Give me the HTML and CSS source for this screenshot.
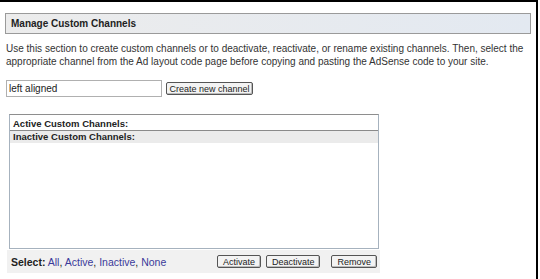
FILE: index.html
```html
<!DOCTYPE html>
<html>
<head>
<meta charset="utf-8">
<link rel="stylesheet" href="styles.css">
</head>
<body>
<div class="frame">
  <div class="header">Manage Custom Channels</div>
  <p class="intro">Use this section to create custom channels or to deactivate, reactivate, or rename existing channels. Then, select the appropriate channel from the Ad layout code page before copying and pasting the AdSense code to your site.</p>
  <div class="create">
    <input class="name" type="text" value="left aligned">
    <button class="btn create-btn">Create new channel</button>
  </div>
  <div class="list">
    <div class="row active-row">Active Custom Channels:</div>
    <div class="row inactive-row">Inactive Custom Channels:</div>
  </div>
  <div class="bar">
    <div class="select"><b>Select:</b> <a href="#">All</a>, <a href="#">Active</a>, <a href="#">Inactive</a>, <a href="#">None</a></div>
    <div class="actions">
      <button class="btn">Activate</button>
      <button class="btn">Deactivate</button>
      <button class="btn remove">Remove</button>
    </div>
  </div>
</div>
</body>
</html>
```

FILE: styles.css
```css
html, body {
  margin: 0;
  padding: 0;
  background: #fff;
}
body {
  font-family: "Liberation Sans", Arial, sans-serif;
  color: #2a2a2a;
}
.frame {
  width: 536px;
  height: 277px;
  border-top: 2px solid #000;
  border-right: 2px solid #000;
  overflow: hidden;
}
.header {
  margin: 11px 5px 0 5px;
  height: 19px;
  border: 1px solid #9a9a9a;
  background: linear-gradient(to right, #ececec, #e3e9f1);
  font-weight: bold;
  font-size: 10px;
  line-height: 19px;
  padding-left: 5px;
  color: #222;
}
.intro {
  margin: 8px 4px 0 6px;
  font-size: 10px;
  line-height: 13px;
  color: #333;
}
.create {
  margin: 12px 0 0 6px;
  display: flex;
  align-items: center;
  gap: 4px;
}
.name {
  box-sizing: border-box;
  width: 156px;
  height: 17px;
  border: 1px solid #b0b0b0;
  padding: 0 2px;
  font-family: "Liberation Sans", Arial, sans-serif;
  font-size: 10px;
  color: #222;
  outline: none;
}
.btn {
  box-sizing: border-box;
  height: 13px;
  padding: 0 5px;
  border: 1px solid #555;
  border-radius: 2px;
  background: #f3f3f3;
  font-family: "Liberation Sans", Arial, sans-serif;
  font-size: 9px;
  line-height: 10px;
  color: #222;
  white-space: nowrap;
  box-shadow: inset -1px -1px 0 #bbb;
}
.create-btn {
  width: 87px;
  padding: 0;
}
.list {
  margin: 17px 0 0 9px;
  width: 368px;
  height: 133px;
  border: 1px solid #a6b2be;
  border-top-color: #8e8e8e;
}
.row {
  font-weight: bold;
  font-size: 9.5px;
  padding-left: 3px;
  color: #222;
}
.active-row {
  height: 15px;
  line-height: 17px;
  border-bottom: 1px solid #8a8a8a;
}
.inactive-row {
  height: 12px;
  line-height: 11px;
  background: #ebebeb;
}
.bar {
  margin: 1px 0 0 7px;
  width: 373px;
  height: 23px;
  background: #f1f1f1;
  display: flex;
  align-items: center;
  justify-content: space-between;
}
.select {
  font-size: 10.5px;
  padding-left: 4px;
  color: #222;
}
.select a {
  color: #3a3a9a;
  text-decoration: none;
}
.actions {
  display: flex;
  gap: 5px;
  padding-right: 3px;
}
.actions .btn {
  height: 13px;
}
.actions .remove {
  margin-left: 6px;
}
```
